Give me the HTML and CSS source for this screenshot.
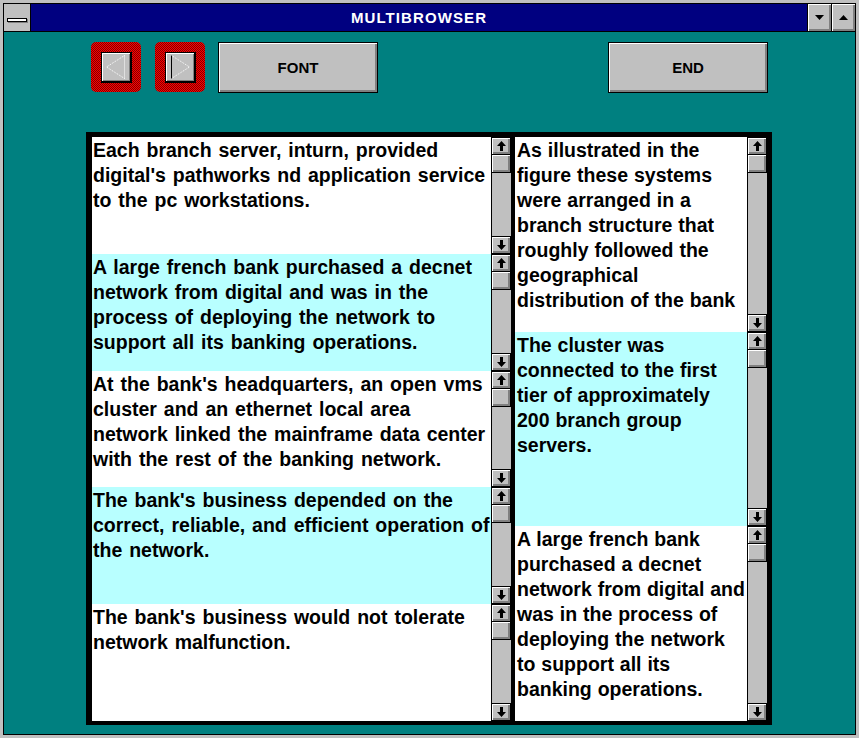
FILE: index.html
```html
<!DOCTYPE html>
<html>
<head>
<meta charset="utf-8">
<link rel="stylesheet" href="styles.css">
</head>
<body>
<div class="window">
  <div class="frame">
    <div class="titlebar">
      <div class="sysmenu"><div class="sysbar"></div></div>
      <div class="title">MULTIBROWSER</div>
      <div class="tbtn"><svg width="9" height="5" viewBox="0 0 9 5"><polygon points="0,0 9,0 4.5,5" fill="#000"/></svg></div>
      <div class="tbtn"><svg width="9" height="5" viewBox="0 0 9 5"><polygon points="0,5 9,5 4.5,0" fill="#000"/></svg></div>
    </div>
    <div class="client">
      <div class="toolbar">
        <div class="nav"><div class="nav-inner">
          <svg width="20" height="24" viewBox="0 0 20 24"><path d="M18.5 0.5 L0.5 12 L18.5 23.5" fill="none" stroke="#fff" stroke-width="1" stroke-dasharray="1 1"/><path d="M18.5 0.5 V23.5" fill="none" stroke="#fff" stroke-width="1" stroke-dasharray="1 1"/></svg>
        </div></div>
        <div class="nav"><div class="nav-inner">
          <svg width="20" height="24" viewBox="0 0 20 24"><path d="M1.5 0.5 L19.5 12 L1.5 23.5" fill="none" stroke="#fff" stroke-width="1" stroke-dasharray="1 1"/><path d="M1.5 0.5 V23.5" fill="none" stroke="#000" stroke-width="1"/></svg>
        </div></div>
        <div class="btn font">FONT</div>
        <div class="spacer"></div>
        <div class="btn end">END</div>
      </div>
      <div class="panel">
        <div class="col left">
          <div class="row white"><div class="txt">Each branch server, inturn, provided<br>digital's pathworks nd application service<br>to the pc workstations.</div><div class="sb"><div class="sbb up"></div><div class="thumb"></div><div class="track"></div><div class="sbb down"></div></div></div>
          <div class="row cyan"><div class="txt">A large french bank purchased a decnet<br>network from digital and was in the<br>process of deploying the network to<br>support all its banking operations.</div><div class="sb"><div class="sbb up"></div><div class="thumb"></div><div class="track"></div><div class="sbb down"></div></div></div>
          <div class="row white"><div class="txt">At the bank's headquarters, an open vms<br>cluster and an ethernet local area<br>network linked the mainframe data center<br>with the rest of the banking network.</div><div class="sb"><div class="sbb up"></div><div class="thumb"></div><div class="track"></div><div class="sbb down"></div></div></div>
          <div class="row cyan"><div class="txt">The bank's business depended on the<br>correct, reliable, and efficient operation of<br>the network.</div><div class="sb"><div class="sbb up"></div><div class="thumb"></div><div class="track"></div><div class="sbb down"></div></div></div>
          <div class="row white"><div class="txt">The bank's business would not tolerate<br>network malfunction.</div><div class="sb"><div class="sbb up"></div><div class="thumb"></div><div class="track"></div><div class="sbb down"></div></div></div>
        </div>
        <div class="col right">
          <div class="row white"><div class="txt">As illustrated in the<br>figure these systems<br>were arranged in a<br>branch structure that<br>roughly followed the<br>geographical<br>distribution of the bank</div><div class="sb"><div class="sbb up"></div><div class="thumb"></div><div class="track"></div><div class="sbb down"></div></div></div>
          <div class="row cyan"><div class="txt">The cluster was<br>connected to the first<br>tier of approximately<br>200 branch group<br>servers.</div><div class="sb"><div class="sbb up"></div><div class="thumb"></div><div class="track"></div><div class="sbb down"></div></div></div>
          <div class="row white"><div class="txt">A large french bank<br>purchased a decnet<br>network from digital and<br>was in the process of<br>deploying the network<br>to support all its<br>banking operations.</div><div class="sb"><div class="sbb up"></div><div class="thumb"></div><div class="track"></div><div class="sbb down"></div></div></div>
        </div>
      </div>
    </div>
  </div>
</div>
</body>
</html>
```
FILE: styles.css
```css
* { box-sizing: border-box; }
html, body { margin: 0; padding: 0; }
body { width: 859px; height: 738px; background: #c0c0c0; font-family: "Liberation Sans", Arial, sans-serif; overflow: hidden; }

.window { width: 859px; height: 738px; border: 3px solid #c0c0c0; background: #c0c0c0; }
.frame { width: 100%; height: 100%; border: 1px solid #000; display: flex; flex-direction: column; }

.titlebar { height: 28px; display: flex; border-bottom: 1px solid #000; background: #000080; flex: none; }
.sysmenu { width: 27px; background: #c0c0c0; border-right: 1px solid #000; display: flex; align-items: center; justify-content: center; }
.sysbar { width: 20px; height: 4px; background: #fff; border: 1px solid #000; box-shadow: 1px 1px 0 #808080; margin-top: 4px; }
.title { flex: 1; color: #fff; font-weight: bold; font-size: 15px; text-align: center; line-height: 27px; letter-spacing: 1.1px; }
.tbtn { width: 24px; border-left: 1px solid #000; background: #c0c0c0; box-shadow: inset 1px 1px 0 #fff, inset -2px -2px 0 #808080; display: flex; align-items: center; justify-content: center; }

.client { flex: 1; background: #008080; padding: 10px 0 0 82px; }
.toolbar { display: flex; height: 51px; align-items: flex-start; width: 682px; }
.nav { width: 50px; height: 50px; border-radius: 5px; background: conic-gradient(#800000 0 25%, #ff0000 0 50%, #800000 0 75%, #ff0000 0) 0 0 / 2px 2px; display: flex; align-items: center; justify-content: center; margin-left: 5px; margin-right: 9px; }
.nav-inner { width: 31px; height: 31px; border: 1px solid #000; border-right-width: 2px; border-bottom-width: 2px; background: #c0c0c0; box-shadow: inset 1px 1px 0 #fff, inset -1px -1px 0 #808080; display: flex; align-items: center; justify-content: center; }
.btn { height: 51px; width: 160px; border: 1px solid #000; background: #c0c0c0; box-shadow: inset 1px 1px 0 #fff, inset -2px -2px 0 #808080; display: flex; align-items: center; justify-content: center; font-size: 15px; font-weight: bold; color: #000; }
.font { margin-left: 4px; }
.spacer { flex: 1; }

.panel { margin-top: 39px; width: 686px; height: 593px; background: #000; padding: 5px 5px 4px 6px; display: flex; gap: 4px; }
.col { display: flex; flex-direction: column; height: 584px; }
.left { width: 419px; }
.right { width: 252px; }
.row { flex: 1; display: flex; min-height: 0; overflow: hidden; }
.white { background: #fff; }
.cyan { background: #b8ffff; }
.txt { flex: 1; font-weight: bold; font-size: 19.5px; word-spacing: 1.5px; line-height: 25px; padding: 1px 0 0 1px; color: #000; overflow: hidden; white-space: nowrap; }
.right .txt { padding-left: 2px; word-spacing: 0.5px; }

.sb { width: 20px; background: #c0c0c0; display: flex; flex-direction: column; border-left: 1px solid #000; }
.sbb, .thumb { height: 18px; flex: none; border: 1px solid #000; border-left: 0; background: #c0c0c0; box-shadow: inset 1px 1px 0 #fff, inset -2px -2px 0 #808080; background-repeat: no-repeat; background-position: center; }
.thumb { border-top: 0; }
.track { flex: 1; }
.up { background-image: url("data:image/svg+xml,%3Csvg xmlns='http://www.w3.org/2000/svg' width='9' height='10' viewBox='0 0 9 10'%3E%3Cpolygon points='4.5,0 9,5 6,5 6,10 3,10 3,5 0,5' fill='%23000'/%3E%3C/svg%3E"); }
.down { background-image: url("data:image/svg+xml,%3Csvg xmlns='http://www.w3.org/2000/svg' width='9' height='10' viewBox='0 0 9 10'%3E%3Cpolygon points='4.5,10 9,5 6,5 6,0 3,0 3,5 0,5' fill='%23000'/%3E%3C/svg%3E"); }
```
